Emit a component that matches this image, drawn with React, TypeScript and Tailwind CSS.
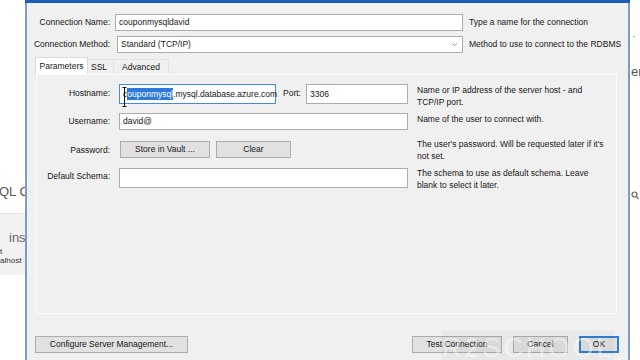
import { ChevronDown } from "lucide-react";

const Field = ({ w, h = 17, children, focus = false }: { w: number; h?: number; children?: React.ReactNode; focus?: boolean }) => (
  <div
    className={`bg-white flex items-center px-[3px] whitespace-nowrap ${focus ? "border border-[#3d8ee3]" : "border border-[#acacac]"}`}
    style={{ width: w, height: h }}
  >
    {children}
  </div>
);

const Btn = ({ w, children, primary = false }: { w: number; children: React.ReactNode; primary?: boolean }) => (
  <div
    className={`h-[17px] flex items-center justify-center bg-[#e1e1e1] ${primary ? "border-2 border-[#2f7fd4]" : "border border-[#adadad]"}`}
    style={{ width: w }}
  >
    {children}
  </div>
);

const Help = ({ children, className = "" }: { children: React.ReactNode; className?: string }) => (
  <div className={`ml-[9px] w-[190px] leading-[12px] ${className}`}>{children}</div>
);

const LeftPage = () => (
  <div className="w-[25px] shrink-0 flex flex-col overflow-hidden bg-white">
    <div className="h-[183px]" />
    <div className="text-[13px] leading-[18px] text-[#555] whitespace-nowrap -ml-[1px]">QL C</div>
    <div className="mt-[12px] h-[62px] bg-[#f2f2f2] border-t border-[#e4e4e4] flex flex-col whitespace-nowrap">
      <div className="mt-[16px] ml-[9px] text-[13px] leading-[16px] text-[#666]">inst</div>
      <div className="mt-[2px] text-[8px] leading-[8px] text-[#333]">t</div>
      <div className="text-[8px] leading-[9px] text-[#333]">alhost</div>
    </div>
  </div>
);

const RightPage = () => (
  <div className="w-[10px] shrink-0 flex flex-col overflow-hidden bg-white text-[#555] whitespace-nowrap">
    <div className="h-[30px]" />
    <div className="text-[9px] leading-[8px] ml-[3px]">.</div>
    <div className="mt-[27px] text-[13px] leading-[14px] ml-[1px]">er</div>
    <div className="mt-[112px] ml-[1px]">
      <svg width="8" height="9" viewBox="0 0 8 9">
        <circle cx="3.5" cy="3.5" r="2.5" fill="none" stroke="#666" strokeWidth="1.2" />
        <line x1="5.3" y1="5.3" x2="7.5" y2="8" stroke="#666" strokeWidth="1.2" />
      </svg>
    </div>
  </div>
);

export default function App() {
  return (
    <div className="w-[640px] h-[360px] overflow-hidden bg-white flex relative font-['Liberation_Sans',Arial,sans-serif] text-[8.5px] text-[#161616]">
      <LeftPage />

      <div className="w-[605px] shrink-0 flex flex-col bg-[#f0f0f0] border-l-2 border-r-2 border-[#7c9cc6]">
        <div className="h-[3px] bg-[#1a5fb4] -mx-[2px]" />

        <div className="mt-[11px] flex items-center h-[17px]">
          <div className="w-[83px] text-right">Connection Name:</div>
          <div className="ml-[5px]">
            <Field w={348}>couponmysqldavid</Field>
          </div>
          <div className="ml-[6px]">Type a name for the connection</div>
        </div>

        <div className="mt-[5px] flex items-center h-[17px]">
          <div className="w-[83px] text-right">Connection Method:</div>
          <div className="ml-[7px] w-[346px] h-[17px] bg-white border border-[#acacac] flex items-center justify-between px-[3px]">
            <span>Standard (TCP/IP)</span>
            <ChevronDown size={9} strokeWidth={1.5} className="text-[#555]" />
          </div>
          <div className="ml-[6px]">Method to use to connect to the RDBMS</div>
        </div>

        <div className="mt-[4px] ml-[8px] flex items-end h-[17px]">
          <div className="w-[53px] h-[17px] bg-white border border-b-0 border-[#dadada] flex items-center justify-center">
            Parameters
          </div>
          <div className="w-[26px] h-[15px] border-t border-r border-[#e4e4e4] flex items-center pl-[3px]">SSL</div>
          <div className="w-[55px] h-[15px] border-t border-r border-[#e4e4e4] flex items-center justify-center">Advanced</div>
        </div>

        <div className="ml-[9px] w-[581px] h-[240px] border border-[#fbfbfb] flex flex-col pt-[9px]">
          <div className="flex h-[20px]">
            <div className="w-[73px] text-right pt-[3px]">Hostname:</div>
            <div className="ml-[9px] relative">
              <Field w={157} h={20} focus>
                <span>c</span>
                <span className="bg-[#2f7ad8] text-white">ouponmysql</span>
                <span>.mysql.database.azure.com</span>
              </Field>
              <svg className="absolute left-[3px] top-[3px]" width="5" height="20" viewBox="0 0 5 20">
                <path d="M0.5 0.5 H4.5 M2.5 0.5 V19.5 M0.5 19.5 H4.5" stroke="#111" strokeWidth="1" fill="none" />
              </svg>
            </div>
            <div className="ml-[7px] w-[23px] pt-[3px]">Port:</div>
            <Field w={102} h={20}>3306</Field>
            <Help>Name or IP address of the server host - and TCP/IP port.</Help>
          </div>

          <div className="mt-[9px] flex h-[17px]">
            <div className="w-[73px] text-right pt-[2px]">Username:</div>
            <div className="ml-[9px]">
              <Field w={289}>david@</Field>
            </div>
            <Help>Name of the user to connect with.</Help>
          </div>

          <div className="mt-[11px] flex h-[16px]">
            <div className="w-[73px] text-right pt-[3px]">Password:</div>
            <div className="ml-[10px] flex gap-[6px]">
              <Btn w={90}>Store in Vault ...</Btn>
              <Btn w={75}>Clear</Btn>
            </div>
            <Help className="ml-[126px] -mt-[3px]">The user's password. Will be requested later if it's not set.</Help>
          </div>

          <div className="mt-[11px] flex h-[20px]">
            <div className="w-[73px] text-right pt-[2px]">Default Schema:</div>
            <div className="ml-[9px]">
              <Field w={289} h={20} />
            </div>
            <Help className="-mt-[1px]">The schema to use as default schema. Leave blank to select it later.</Help>
          </div>
        </div>

        <div className="mt-[22px] flex items-center">
          <div className="ml-[8px]">
            <Btn w={153}>Configure Server Management...</Btn>
          </div>
          <div className="ml-auto mr-[9px] flex gap-[11px]">
            <Btn w={90}>Test Connection</Btn>
            <Btn w={55}>Cancel</Btn>
            <Btn w={40} primary>OK</Btn>
          </div>
        </div>
      </div>

      <RightPage />

      <div
        aria-hidden
        className="absolute left-[442px] top-[331px] w-[172px] h-[29px] bg-black/[0.03] text-white/45 text-[27px] leading-[34px] tracking-[3px] overflow-hidden pointer-events-none select-none"
      >
        R2SCHOOLS
      </div>
    </div>
  );
}
